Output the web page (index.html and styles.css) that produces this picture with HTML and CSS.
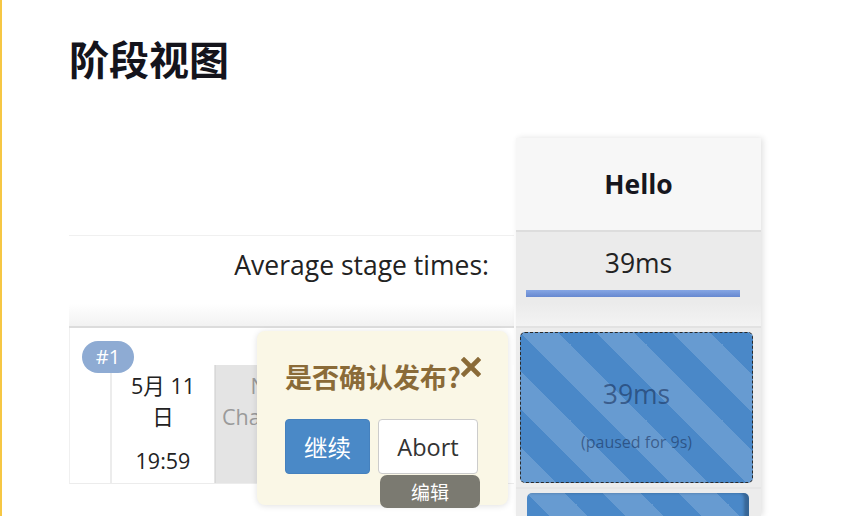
FILE: index.html
```html
<!DOCTYPE html>
<html lang="zh">
<head>
<meta charset="utf-8">
<title>阶段视图</title>
<link rel="stylesheet" href="styles.css">
</head>
<body>
<div class="page">
  <h1 class="title">阶段视图</h1>
  <div class="stage-view">
    <div class="left-col">
      <div class="avg-label"><span>Average stage times:</span></div>
      <div class="build-row">
        <span class="badge">#1</span>
        <div class="gutter"></div>
        <div class="date-cell">
          <div class="date">5月 11<br>日</div>
          <div class="time">19:59</div>
        </div>
        <div class="changes-cell">No<br>Changes</div>
        <div class="rest-cell"></div>
      </div>
    </div>
    <div class="stage-col">
      <div class="stage-head">Hello</div>
      <div class="stage-avg">
        <div class="avg-time">39ms</div>
        <div class="avg-bar"></div>
      </div>
      <div class="stage-cell">
        <div class="stage-box paused">
          <div class="box-time">39ms</div>
          <div class="box-note">(paused for 9s)</div>
        </div>
      </div>
      <div class="stage-cell next">
        <div class="stage-box"></div>
      </div>
    </div>
    <div class="popup">
      <div class="popup-title">是否确认发布?<svg class="close" viewBox="0 0 20 20" width="20" height="20"><path d="M3 3 L17 17 M17 3 L3 17" stroke="#8a6b38" stroke-width="4.6" stroke-linecap="square"/></svg></div>
      <div class="popup-actions">
        <button class="btn btn-primary">继续</button>
        <button class="btn btn-default">Abort</button>
      </div>
      <div class="tooltip">编辑</div>
    </div>
  </div>
</div>
</body>
</html>
```
FILE: styles.css
```css
html, body {
  margin: 0;
  padding: 0;
  background: #ffffff;
}
body {
  font-family: "Open Sans", "Noto Sans CJK SC", sans-serif;
  color: #222;
  overflow: hidden;
}
.page {
  border-left: 2px solid #f6c744;
  height: 516px;
  box-sizing: border-box;
  padding-left: 67px;
  padding-top: 31px;
}
.title {
  margin: 0;
  font-family: "Noto Sans CJK SC", sans-serif;
  font-size: 40px;
  line-height: 55px;
  font-weight: 700;
  color: #14141c;
  height: 55px;
}
.stage-view {
  position: relative;
  display: flex;
  margin-top: 52px;
  gap: 2px;
}
.left-col {
  width: 445px;
  display: flex;
  flex-direction: column;
  padding-top: 97px;
}
.avg-label {
  flex-shrink: 0;
  height: 93px;
  box-sizing: border-box;
  border-top: 1px solid #f0f0f0;
  background: linear-gradient(#ffffff 75%, #f2f2f2);
  text-align: right;
  padding: 11px 25px 0 0;
  font-size: 26.5px;
  line-height: 36px;
  color: #222;
  border-bottom: 2px solid #dcdcdc;
}
.build-row {
  flex-shrink: 0;
  position: relative;
  height: 156px;
  display: flex;
  padding-top: 37px;
  box-sizing: border-box;
  border-bottom: 1px solid #ececec;
  border-left: 1px solid #f0f0f0;
}
.badge {
  position: absolute;
  left: 12px;
  top: 13px;
  width: 52px;
  height: 32px;
  border-radius: 16px;
  background: #8eabd3;
  color: #fff;
  font-size: 20px;
  line-height: 32px;
  text-align: center;
}
.gutter {
  width: 40px;
  border-right: 2px solid #ececec;
}
.date-cell {
  width: 102px;
  background: #fff;
  text-align: center;
  font-size: 21.5px;
  color: #222;
  border-right: 1px solid #e4e4e4;
}
.date {
  line-height: 31px;
  padding-top: 5px;
}
.time {
  margin-top: 13px;
  line-height: 31px;
}
.changes-cell {
  width: 98px;
  background: #e4e4e4;
  color: #9a9a9a;
  font-size: 21.5px;
  line-height: 31px;
  text-align: center;
  padding-top: 5px;
  border-left: 1px solid #d8d8d8;
}
.rest-cell {
  flex: 1;
  background: #fff;
}
.stage-col {
  width: 245px;
  display: flex;
  flex-direction: column;
  box-shadow: 2px 0 6px rgba(0,0,0,0.12);
  height: 378px;
  overflow: hidden;
}
.stage-col > div {
  flex-shrink: 0;
}
.stage-head {
  height: 92px;
  background: #f7f7f7;
  display: flex;
  align-items: center;
  justify-content: center;
  font-size: 26.5px;
  font-weight: 700;
  color: #16161e;
  border-bottom: 2px solid #dddddd;
}
.stage-avg {
  height: 94px;
  background: linear-gradient(#ebebeb 75%, #f3f3f3);
  display: flex;
  flex-direction: column;
  align-items: center;
  border-bottom: 2px solid #e2e2e2;
}
.avg-time {
  font-size: 26.5px;
  line-height: 36px;
  margin-top: 13px;
  color: #222;
}
.avg-bar {
  margin-top: 9px;
  width: 214px;
  height: 7px;
  margin-right: 11px;
  background: linear-gradient(#86a6e4, #6688d0);
}
.stage-cell {
  background: #ececec;
  padding: 4px 8px 4px 4px;
  border-bottom: 2px solid #e6e6e6;
}
.stage-box {
  height: 151px;
  border-radius: 5px;
  background-color: #4a88c8;
  background-image: linear-gradient(45deg, rgba(255,255,255,0.16) 25%, transparent 25%, transparent 50%, rgba(255,255,255,0.16) 50%, rgba(255,255,255,0.16) 75%, transparent 75%, transparent);
  background-size: 76px 76px;
  box-sizing: border-box;
  display: flex;
  flex-direction: column;
  align-items: center;
}
.stage-box.paused {
  border: 1px dashed #2a2a2a;
}
.box-time {
  font-size: 26.5px;
  line-height: 36px;
  margin-top: 43px;
  color: rgba(20,40,80,0.55);
}
.box-note {
  font-size: 16px;
  margin-top: 19px;
  color: rgba(20,40,80,0.55);
}
.stage-cell.next {
  padding: 4px 12px 0 11px;
}
.stage-cell.next .stage-box {
  height: 60px;
  box-shadow: inset -5px 0 3px rgba(0,0,0,0.25);
}
.popup {
  position: absolute;
  left: 188px;
  top: 193px;
  width: 251px;
  height: 174px;
  background: #faf7e6;
  border-radius: 8px;
  box-shadow: 0 1px 6px rgba(0,0,0,0.12);
  box-sizing: border-box;
  padding: 26px 0 0 28px;
}
.popup-title {
  position: relative;
  font-family: "Noto Sans CJK SC", sans-serif;
  font-size: 27px;
  font-weight: 700;
  color: #8a6b38;
  line-height: 40px;
}
.close {
  position: absolute;
  left: 176px;
  top: 0px;
}
.popup-actions {
  display: flex;
  gap: 8px;
  margin-top: 22px;
}
.btn {
  font-family: "Open Sans", "Noto Sans CJK SC", sans-serif;
  font-size: 23.5px;
  height: 55px;
  border-radius: 4px;
  padding: 0;
  cursor: pointer;
}
.btn-primary {
  width: 85px;
  background: #4a89c7;
  color: #fff;
  border: 1px solid #4581be;
}
.btn-default {
  width: 100px;
  background: #fff;
  color: #333;
  border: 1px solid #cccccc;
}
.tooltip {
  position: absolute;
  left: 123px;
  top: 144px;
  width: 100px;
  height: 33px;
  border-radius: 7px;
  background: #7b7a71;
  color: #fff;
  font-family: "Noto Sans CJK SC", sans-serif;
  font-size: 19px;
  line-height: 33px;
  text-align: center;
}
```
